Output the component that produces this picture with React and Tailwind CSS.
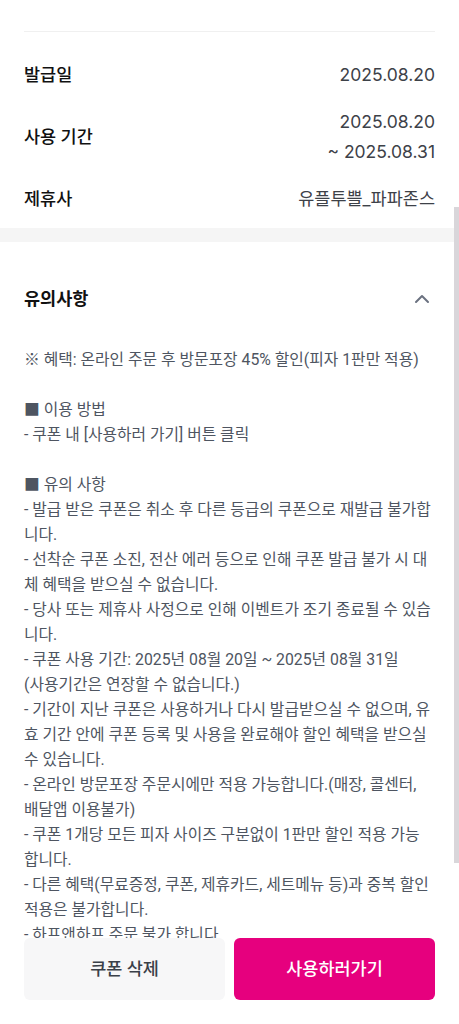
import { ChevronUp } from "lucide-react";

const infoRows = [
    { label: '발급일', value: ['2025.08.20'] },
    { label: '사용 기간', value: ['2025.08.20', '~ 2025.08.31'] },
    { label: '제휴사', value: ['유플투쁠_파파존스'] },
]

// line breaks follow the app's own wrapping
const noticeLines = [
    '※ 혜택: 온라인 주문 후 방문포장 45% 할인(피자 1판만 적용)',
    '',
    '■ 이용 방법',
    '- 쿠폰 내 [사용하러 가기] 버튼 클릭',
    '',
    '■ 유의 사항',
    '- 발급 받은 쿠폰은 취소 후 다른 등급의 쿠폰으로 재발급 불가합',
    '니다.',
    '- 선착순 쿠폰 소진, 전산 에러 등으로 인해 쿠폰 발급 불가 시 대',
    '체 혜택을 받으실 수 없습니다.',
    '- 당사 또는 제휴사 사정으로 인해 이벤트가 조기 종료될 수 있습',
    '니다.',
    '- 쿠폰 사용 기간: 2025년 08월 20일 ~ 2025년 08월 31일',
    '(사용기간은 연장할 수 없습니다.)',
    '- 기간이 지난 쿠폰은 사용하거나 다시 발급받으실 수 없으며, 유',
    '효 기간 안에 쿠폰 등록 및 사용을 완료해야 할인 혜택을 받으실',
    '수 있습니다.',
    '- 온라인 방문포장 주문시에만 적용 가능합니다.(매장, 콜센터,',
    '배달앱 이용불가)',
    '- 쿠폰 1개당 모든 피자 사이즈 구분없이 1판만 할인 적용 가능',
    '합니다.',
    '- 다른 혜택(무료증정, 쿠폰, 제휴카드, 세트메뉴 등)과 중복 할인',
    '적용은 불가합니다.',
    '- 하프앤하프 주문 불가 합니다.',
]

const App = () => {
    return (
        <div className="relative h-[1024px] flex flex-col bg-white font-['Roboto','Noto_Sans_CJK_KR',sans-serif]">

            <div className="h-[938px] overflow-hidden">
                {/* coupon info */}
                <div className="px-6 pt-[31px]">
                    <div className="border-t border-[#f0f0f0] pt-[28px] pb-[14px] flex flex-col gap-[17px]">
                        {infoRows.map((row) => (
                            <div key={row.label} className="flex items-center justify-between">
                                <span className="text-[17.5px] font-medium text-[#111111] leading-[30px]">{row.label}</span>
                                <div className="flex flex-col items-end font-['Inter','Noto_Sans_CJK_KR',sans-serif]">
                                    {row.value.map((v) => (
                                        <span key={v} className="text-[17.5px] text-[#3d4148] leading-[30px]">{v}</span>
                                    ))}
                                </div>
                            </div>
                        ))}
                    </div>
                </div>

                <div className="h-[14px] bg-[#f5f5f5]" />

                {/* notice */}
                <div className="px-6 pt-[45px]">
                    <div className="flex items-center justify-between">
                        <h2 className="text-[17.5px] font-bold text-[#111111] leading-[24px]">유의사항</h2>
                        <ChevronUp size={24} strokeWidth={2} className="text-[#6b7280] mr-px" />
                    </div>
                    <div className="mt-[36px] text-[15.8px] leading-[25px] text-[#4e5561]">
                        {noticeLines.map((line, i) => (
                            <p key={i} className="h-[25px] whitespace-nowrap">{line}</p>
                        ))}
                    </div>
                </div>
            </div>

            {/* bottom buttons */}
            <div className="px-6 pb-6 flex gap-[9px]">
                <button className="flex-1 h-[62px] rounded-md bg-[#f7f7f8] text-[17.5px] font-medium text-[#3a4048]">
                    쿠폰 삭제
                </button>
                <button className="flex-1 h-[62px] rounded-md bg-[#e6007e] text-[17.5px] font-medium text-white">
                    사용하러가기
                </button>
            </div>

            {/* overlay scrollbar */}
            <div className="absolute right-0 top-[207px] w-[5px] h-[656px] bg-[#d9d6da]" />
        </div>
    )
}

export default App
